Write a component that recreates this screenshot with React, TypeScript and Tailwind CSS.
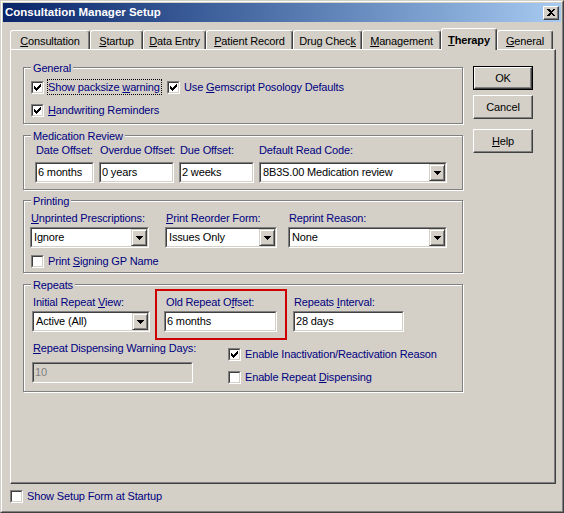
import React from 'react';

type Kids = { children?: React.ReactNode };

// mnemonic underline
function U({ children }: Kids) {
  return <span className="underline decoration-1 underline-offset-[1px]">{children}</span>;
}

function Sunken({ className = '', inner = '', children }: { className?: string; inner?: string } & Kids) {
  return (
    <div className={`border border-t-[#808080] border-l-[#808080] border-r-white border-b-white ${className}`}>
      <div className={`h-full w-full border border-t-[#404040] border-l-[#404040] border-r-[#d4d0c8] border-b-[#d4d0c8] ${inner}`}>
        {children}
      </div>
    </div>
  );
}

function Edit({ value, w, disabled }: { value: string; w: string; disabled?: boolean }) {
  return (
    <Sunken
      className={`h-[21px] ${w}`}
      inner={disabled ? 'bg-[#d4d0c8] text-[#808080] pl-[1px] leading-[17px]' : 'bg-white text-black pl-[1px] leading-[17px]'}
    >
      {value}
    </Sunken>
  );
}

function Tri() {
  return (
    <svg width="7" height="4" viewBox="0 0 7 4" shapeRendering="crispEdges">
      <rect x="0" y="0" width="7" height="1" fill="#000" />
      <rect x="1" y="1" width="5" height="1" fill="#000" />
      <rect x="2" y="2" width="3" height="1" fill="#000" />
      <rect x="3" y="3" width="1" height="1" fill="#000" />
    </svg>
  );
}

function Combo({ value, w }: { value: string; w: string }) {
  return (
    <Sunken className={`h-[21px] ${w}`} inner="bg-white flex">
      <span className="flex-1 pl-[2px] leading-[17px] text-black whitespace-nowrap overflow-hidden">{value}</span>
      <div className="w-[16px] h-[17px] bg-[#d4d0c8] border border-t-[#d4d0c8] border-l-[#d4d0c8] border-r-[#404040] border-b-[#404040] shadow-[inset_1px_1px_0_white,inset_-1px_-1px_0_#808080] flex items-center justify-center">
        <Tri />
      </div>
    </Sunken>
  );
}

function Check({ checked }: { checked?: boolean }) {
  return (
    <Sunken className="w-[13px] h-[13px] shrink-0" inner="bg-white flex items-center justify-center">
      {checked && (
        <svg width="7" height="7" viewBox="0 0 7 7" shapeRendering="crispEdges">
          <rect x="6" y="0" width="1" height="1" fill="#000" />
          <rect x="5" y="1" width="2" height="1" fill="#000" />
          <rect x="0" y="2" width="1" height="1" fill="#000" />
          <rect x="4" y="2" width="3" height="1" fill="#000" />
          <rect x="0" y="3" width="2" height="1" fill="#000" />
          <rect x="3" y="3" width="3" height="1" fill="#000" />
          <rect x="0" y="4" width="5" height="1" fill="#000" />
          <rect x="1" y="5" width="3" height="1" fill="#000" />
          <rect x="2" y="6" width="1" height="1" fill="#000" />
        </svg>
      )}
    </Sunken>
  );
}

function CheckItem({ checked, focus, className = '', children }: { checked?: boolean; focus?: boolean; className?: string } & Kids) {
  return (
    <div className={`flex items-center ${className}`}>
      <Check checked={checked} />
      <span
        className={`ml-[3px] border leading-[14px] whitespace-nowrap text-[#000080] ${
          focus ? 'border-dotted border-black w-[115px]' : 'border-transparent'
        }`}
      >
        {children}
      </span>
    </div>
  );
}

function Group({ title, className = '', children }: { title: string; className?: string } & Kids) {
  return (
    <div className={`relative border border-[#808080] shadow-[inset_1px_1px_0_white,1px_1px_0_white] ${className}`}>
      <span className="absolute left-[7px] top-[-6px] bg-[#d4d0c8] px-[2px] leading-[13px] text-[#000080]">{title}</span>
      {children}
    </div>
  );
}

function Label({ children, className = '' }: { className?: string } & Kids) {
  return <div className={`leading-[13px] text-[#000080] whitespace-nowrap ${className}`}>{children}</div>;
}

function Btn({ children, def, className = '' }: { def?: boolean; className?: string } & Kids) {
  const face = (
    <div className="h-full w-full flex items-center justify-center border border-t-white border-l-white border-r-[#404040] border-b-[#404040] shadow-[inset_-1px_-1px_0_#808080] text-black">
      {children}
    </div>
  );
  return <div className={`w-[60px] h-[24px] ${def ? 'border border-black' : ''} ${className}`}>{face}</div>;
}

const tabs = [
  { label: <><U>C</U>onsultation</>, w: 'w-[80px]' },
  { label: <><U>S</U>tartup</>, w: 'w-[53px]' },
  { label: <><U>D</U>ata Entry</>, w: 'w-[63px]' },
  { label: <><U>P</U>atient Record</>, w: 'w-[87px]' },
  { label: <>Drug Chec<U>k</U></>, w: 'w-[69px]' },
  { label: <><U>M</U>anagement</>, w: 'w-[79px]' },
  { label: <><U>T</U>herapy</>, w: 'w-[56px]', active: true },
  { label: <><U>G</U>eneral</>, w: 'w-[56px]' },
];

export default function App() {
  return (
    <div className="w-[564px] h-[513px] bg-[#d4d0c8] border border-t-[#d4d0c8] border-l-[#d4d0c8] border-r-[#404040] border-b-[#404040] font-['Liberation_Sans',Arial,sans-serif] text-[11px] tracking-[-0.15px] text-black overflow-hidden">
      <div className="h-full border border-t-white border-l-white border-r-[#808080] border-b-[#808080] p-[1px] flex flex-col">
        {/* title bar */}
        <div className="h-[19px] shrink-0 bg-linear-to-r from-[#0a246a] to-[#a6caf0] flex items-center pl-[2px] pr-[2px]">
          <span className="flex-1 text-white font-bold text-[11.5px] tracking-normal leading-[19px] whitespace-nowrap">Consultation Manager Setup</span>
          <div className="w-[16px] h-[14px] bg-[#d4d0c8] border border-t-white border-l-white border-r-[#404040] border-b-[#404040] shadow-[inset_-1px_-1px_0_#808080] flex items-center justify-center">
            <svg width="8" height="7" viewBox="0 0 8 7" shapeRendering="crispEdges">
              <path d="M0 0h2l2 2 2-2h2L5 3.5 8 7H6L4 5 2 7H0l3-3.5z" fill="#000" />
            </svg>
          </div>
        </div>

        <div className="flex-1 flex flex-col pl-[7px] pt-[6px]">
          {/* tabs */}
          <div className="h-[21px] flex items-end">
            {tabs.map((t, i) =>
              t.active ? (
                <div
                  key={i}
                  className={`${t.w} h-[22px] -mb-px relative z-10 bg-[#d4d0c8] border-t border-l border-r border-t-white border-l-white border-r-[#404040] rounded-t-[3px] shadow-[inset_-1px_0_0_#808080] flex items-start justify-center pt-[4px] font-bold leading-[14px]`}
                >
                  {t.label}
                </div>
              ) : (
                <div
                  key={i}
                  className={`${t.w} h-[19px] bg-[#d4d0c8] border-t border-l border-r border-t-white border-l-white border-r-[#404040] rounded-t-[3px] shadow-[inset_-1px_0_0_#808080] flex items-start justify-center pt-[3px] leading-[14px]`}
                >
                  {t.label}
                </div>
              )
            )}
          </div>

          {/* tab page */}
          <div className="w-[546px] h-[435px] border border-t-white border-l-white border-r-[#404040] border-b-[#404040] shadow-[inset_-1px_-1px_0_#808080] flex items-start pt-[17px] pl-[12px]">
            <div className="w-[440px] flex flex-col">
              <Group title="General" className="h-[57px] pt-[11px] pl-[7px]">
                <div className="flex items-center">
                  <CheckItem checked focus>
                    Show packsize <U>w</U>arning
                  </CheckItem>
                  <CheckItem checked className="ml-[5px]">
                    Use <U>G</U>emscript Posology Defaults
                  </CheckItem>
                </div>
                <CheckItem checked className="mt-[7px]">
                  <U>H</U>andwriting Reminders
                </CheckItem>
              </Group>

              <Group title="Medication Review" className="h-[55px] mt-[11px] pt-[8px] pl-[11px]">
                <div className="flex gap-[5px]">
                  <div className="w-[59px]">
                    <Label className="pl-[1px]">Date Offset:</Label>
                    <div className="mt-[5px]"><Edit value="6 months" w="w-[59px]" /></div>
                  </div>
                  <div className="w-[75px]">
                    <Label className="pl-[1px]">Overdue Offset:</Label>
                    <div className="mt-[5px]"><Edit value="0 years" w="w-[75px]" /></div>
                  </div>
                  <div className="w-[75px]">
                    <Label className="pl-[1px]">Due Offset:</Label>
                    <div className="mt-[5px]"><Edit value="2 weeks" w="w-[75px]" /></div>
                  </div>
                  <div className="w-[188px]">
                    <Label>Default Read Code:</Label>
                    <div className="mt-[5px]"><Combo value="8B3S.00 Medication review" w="w-[188px]" /></div>
                  </div>
                </div>
              </Group>

              <Group title="Printing" className="h-[73px] mt-[10px] pt-[11px] pl-[6px]">
                <div className="flex">
                  <div className="w-[119px]">
                    <Label className="pl-[1px]"><U>U</U>nprinted Prescriptions:</Label>
                    <div className="mt-[2px]"><Combo value="Ignore" w="w-[119px]" /></div>
                  </div>
                  <div className="w-[112px] ml-[16px]">
                    <Label className="pl-[1px]"><U>P</U>rint Reorder Form:</Label>
                    <div className="mt-[2px]"><Combo value="Issues Only" w="w-[112px]" /></div>
                  </div>
                  <div className="w-[159px] ml-[11px]">
                    <Label className="pl-[1px]">Reprint Reason:</Label>
                    <div className="mt-[2px]"><Combo value="None" w="w-[159px]" /></div>
                  </div>
                </div>
                <CheckItem className="mt-[5px] ml-[1px]">
                  Print <U>S</U>igning GP Name
                </CheckItem>
              </Group>

              <Group title="Repeats" className="h-[108px] mt-[11px] pt-[11px] pl-[8px]">
                <div className="flex">
                  <div className="w-[118px]">
                    <Label className="pl-[1px]">Initial Repeat <U>V</U>iew:</Label>
                    <div className="mt-[2px]"><Combo value="Active (All)" w="w-[118px]" /></div>
                  </div>
                  <div className="w-[113px] ml-[14px] relative">
                    <Label className="pl-[2px]">Old Repeat O<U>f</U>fset:</Label>
                    <div className="mt-[2px]"><Edit value="6 months" w="w-[113px]" /></div>
                    <div className="absolute left-[-9px] right-[-10px] top-[-7px] bottom-[-8px] border-2 border-[#cc0000]" />
                  </div>
                  <div className="w-[111px] ml-[16px]">
                    <Label className="pl-[1px]">Repeats <U>I</U>nterval:</Label>
                    <div className="mt-[2px]"><Edit value="28 days" w="w-[111px]" /></div>
                  </div>
                </div>
                <div className="flex items-start mt-[10px]">
                  <div className="w-[161px]">
                    <Label className="pl-[1px]"><U>R</U>epeat Dispensing Warning Days:</Label>
                    <div className="mt-[7px]"><Edit value="10" w="w-[161px]" disabled /></div>
                  </div>
                  <div className="ml-[35px] pt-[4px]">
                    <CheckItem checked>Enable Inactivation/Reactivation Reason</CheckItem>
                    <CheckItem className="mt-[7px]">
                      Enable Repeat <U>D</U>ispensing
                    </CheckItem>
                  </div>
                </div>
              </Group>
            </div>

            <div className="ml-[10px] -mt-px flex flex-col">
              <Btn def>OK</Btn>
              <Btn className="mt-[5px]">Cancel</Btn>
              <Btn className="mt-[10px]">
                <U>H</U>elp
              </Btn>
            </div>
          </div>

          {/* footer */}
          <div className="mt-[5px] flex items-center">
            <Check />
            <span className="ml-[4px] leading-[14px] text-[#000080] whitespace-nowrap">Show Setup Form at Startup</span>
          </div>
        </div>
      </div>
    </div>
  );
}
